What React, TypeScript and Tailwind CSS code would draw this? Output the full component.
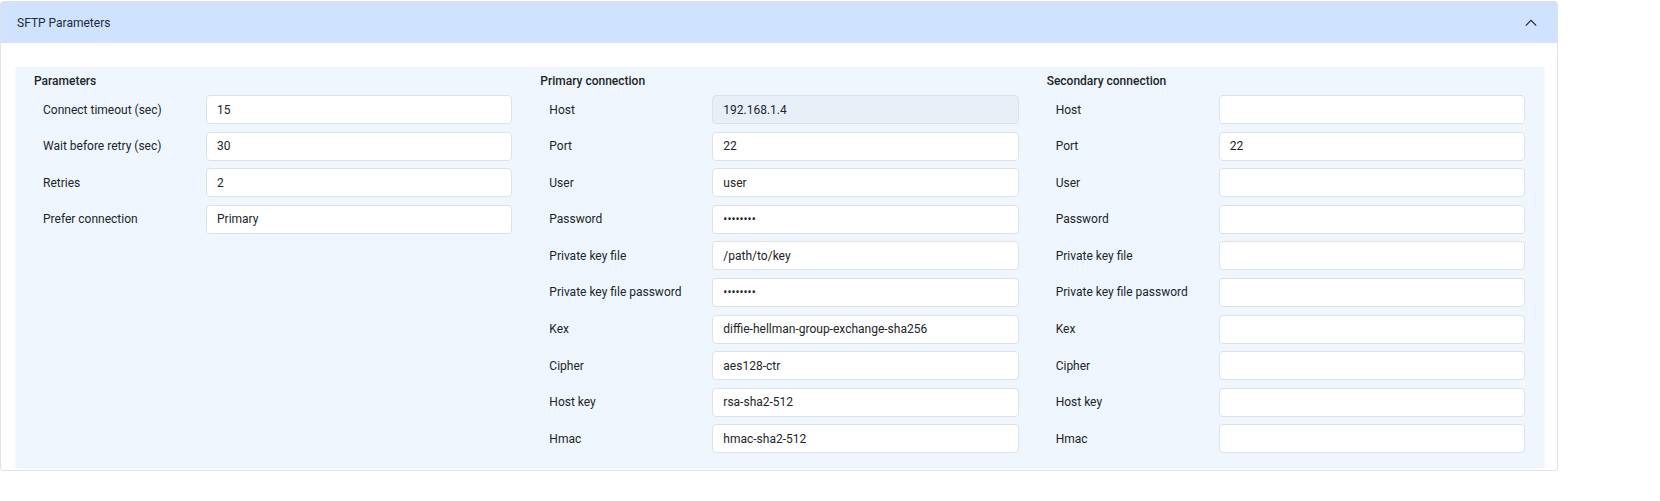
import React from "react";

const Chevron = () => (
  <svg width="14" height="14" viewBox="0 0 16 16" fill="none" stroke="#1e2a44" strokeWidth="1.4">
    <path d="M2 11 L8 5 L14 11" />
  </svg>
);

type Row = [string, string, boolean?];

const Field = ({ label, value, disabled }: { label: string; value: string; disabled?: boolean }) => (
  <div className="flex items-center h-[29px]">
    <div className="w-[172px] pl-[9px] text-[12px] text-[#212529]">{label}</div>
    <div
      className={`flex-1 h-[29px] rounded-[4px] border border-[#dee2e6] flex items-center px-[10px] text-[12px] text-[#212529] ${
        disabled ? "bg-[#e8eff9]" : "bg-white"
      }`}
    >
      {value}
    </div>
  </div>
);

const Col = ({ title, rows }: { title: string; rows: Row[] }) => (
  <div className="flex flex-col">
    <div className="text-[12px] font-medium text-[#212529] h-[16px] leading-[16px] mb-[6px]">{title}</div>
    <div className="flex flex-col gap-[7.6px]">
      {rows.map((r) => (
        <Field key={r[0]} label={r[0]} value={r[1]} disabled={r[2]} />
      ))}
    </div>
  </div>
);

const dots = "••••••••";

export default function App() {
  const keys = ["Host", "Port", "User", "Password", "Private key file", "Private key file password", "Kex", "Cipher", "Host key", "Hmac"];
  const primVals = ["192.168.1.4", "22", "user", dots, "/path/to/key", dots, "diffie-hellman-group-exchange-sha256", "aes128-ctr", "rsa-sha2-512", "hmac-sha2-512"];
  const secVals = ["", "22", "", "", "", "", "", "", "", ""];
  return (
    <div className="w-[1660px] h-[501px] bg-white" style={{ fontFamily: "Roboto, 'Liberation Sans', sans-serif" }}>
      <div className="w-[1558px] mt-[1px] border border-[#dfe3e8] rounded-[3px] overflow-hidden">
        <div className="h-[41px] bg-[#cfe2fe] flex items-center justify-between pl-[16px] pr-[19px] text-[12px] text-[#1e2a44]">
          <span>SFTP Parameters</span>
          <Chevron />
        </div>
        <div className="pt-[24px] pb-[3px] pl-[15px] pr-[13px]">
          <div className="bg-[#eff6fe] pl-[18px] pr-[19px] pt-[6px] pb-[14px] grid grid-cols-3 gap-x-[28px] shadow-[0_1px_2px_rgba(0,0,0,0.08)]">
            <Col
              title="Parameters"
              rows={[
                ["Connect timeout (sec)", "15"],
                ["Wait before retry (sec)", "30"],
                ["Retries", "2"],
                ["Prefer connection", "Primary"],
              ]}
            />
            <Col title="Primary connection" rows={keys.map((k, i) => [k, primVals[i], i === 0] as Row)} />
            <Col title="Secondary connection" rows={keys.map((k, i) => [k, secVals[i]] as Row)} />
          </div>
        </div>
      </div>
    </div>
  );
}
